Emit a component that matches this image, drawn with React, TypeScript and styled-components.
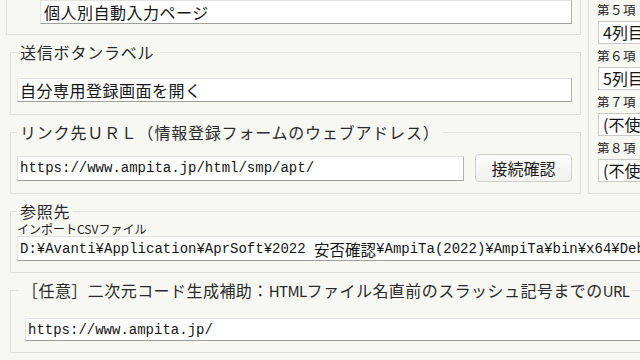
import React from "react";
import styled, { createGlobalStyle } from "styled-components";

const Global = createGlobalStyle`
  html, body { margin: 0; padding: 0; background: #f8f8f3; }
  body { font-family: "Noto Sans CJK JP", sans-serif; color: #1c1c1c; }
`;

const Viewport = styled.div`
  width: 640px;
  height: 360px;
  overflow: hidden;
  background: #f8f8f3;
`;

const TopRow = styled.div`
  display: flex;
  align-items: flex-start;
  margin-top: -26px;
  width: 760px;
`;

const LeftCol = styled.div`
  flex: none;
  width: 575px;
  margin-left: 6px;
  display: flex;
  flex-direction: column;
  gap: 7px;
`;

const Group = styled.fieldset<{ $ml?: number; $pl?: number; $pr?: number; $pt?: number; $pb?: number; $w?: string }>`
  margin: 0 0 0 ${(p) => p.$ml ?? 0}px;
  padding: ${(p) => p.$pt ?? 0}px ${(p) => p.$pr ?? 8}px ${(p) => p.$pb ?? 11}px ${(p) => p.$pl ?? 6}px;
  border: 1px solid #e0dfd8;
  min-width: 0;
  width: ${(p) => p.$w ?? "auto"};
  box-sizing: border-box;
`;

const Legend = styled.legend<{ $ls?: number }>`
  padding: 0 3px;
  margin: 0;
  font-size: 16px;
  line-height: 20px;
  letter-spacing: ${(p) => p.$ls ?? 0.8}px;
  color: #2a2a2a;
  white-space: nowrap;
`;

const Narrow = styled.span`
  letter-spacing: -0.6px;
  font-size: 15px;
`;

const TextBox = styled.div<{ $mt?: number; $h?: number; $ml?: number; $mono?: boolean; $pl?: number }>`
  box-sizing: border-box;
  height: ${(p) => p.$h ?? 24}px;
  margin-top: ${(p) => p.$mt ?? 0}px;
  margin-left: ${(p) => p.$ml ?? 0}px;
  padding-left: ${(p) => p.$pl ?? 2}px;
  background: #ffffff;
  border: 1px solid;
  border-color: #e2e2e0 #b4b4b2 #9e9e9c #e2e2e0;
  display: flex;
  align-items: center;
  white-space: pre;
  overflow: hidden;
  flex: 1;
  min-width: 0;
  font-family: ${(p) =>
    p.$mono ? `"Liberation Mono", "Noto Sans CJK JP", monospace` : `"Noto Sans CJK JP", sans-serif`};
  font-size: ${(p) => (p.$mono ? 14 : 16)}px;
  letter-spacing: ${(p) => (p.$mono ? 0 : 0.5)}px;
  color: #141414;
`;

const Wide = styled.span`
  font-family: "Noto Sans CJK JP", sans-serif;
  font-size: 15.5px;
`;

const Row = styled.div`
  display: flex;
  align-items: center;
  gap: 11px;
  margin-top: 12px;
  height: 28px;
`;

const Button = styled.button`
  flex: none;
  width: 97px;
  height: 28px;
  box-sizing: border-box;
  border: 1px solid #cfcfcc;
  border-radius: 4px;
  background: linear-gradient(#fbfbf9, #f1f1ee);
  font-family: "Noto Sans CJK JP", sans-serif;
  font-size: 16px;
  color: #1c1c1c;
  padding: 0;
`;

const RightCol = styled.fieldset`
  flex: none;
  width: 140px;
  margin: 0 0 0 7px;
  padding: 0 8px 11px 8px;
  border: 1px solid #e0dfd8;
  box-sizing: border-box;
  display: flex;
  flex-direction: column;
`;

const ItemLabel = styled.div`
  height: 23px;
  line-height: 23px;
  font-size: 12.5px;
  letter-spacing: 0.5px;
  color: #222;
  white-space: nowrap;
`;

const SelectBox = styled.div`
  box-sizing: border-box;
  height: 23px;
  margin-left: 1px;
  background: #ffffff;
  border: 1px solid #c9c9c6;
  padding-left: 4px;
  font-size: 16px;
  line-height: 21px;
  color: #141414;
  white-space: nowrap;
  overflow: hidden;
`;

const FullGroup = styled(Group)`
  margin-top: 7px;
`;

const SmallLabel = styled.div`
  height: 15px;
  line-height: 15px;
  font-size: 12px;
  color: #1c1c1c;
  white-space: nowrap;
`;

const items = [
  { label: "第５項", value: "4列目" },
  { label: "第６項", value: "5列目" },
  { label: "第７項", value: "(不使用)" },
  { label: "第８項", value: "(不使用)" },
];

export default function App() {
  return (
    <Viewport>
      <Global />
      <TopRow>
        <LeftCol>
          <Group $pl={33} $pr={8} $pt={25} $pb={10}>
            <TextBox $pl={3}>個人別自動入力ページ</TextBox>
          </Group>
          <Group $ml={4} $pb={12}>
            <Legend>送信ボタンラベル</Legend>
            <TextBox $mt={16}>自分専用登録画面を開く</TextBox>
          </Group>
          <Group $ml={4}>
            <Legend>リンク先ＵＲＬ（情報登録フォームのウェブアドレス）</Legend>
            <Row>
              <TextBox $h={25} $mono>https://www.ampita.jp/html/smp/apt/</TextBox>
              <Button>接続確認</Button>
            </Row>
          </Group>
        </LeftCol>
        <RightCol>
          <SelectBox>3列目</SelectBox>
          {items.map((it) => (
            <React.Fragment key={it.label}>
              <ItemLabel>{it.label}</ItemLabel>
              <SelectBox>{it.value}</SelectBox>
            </React.Fragment>
          ))}
        </RightCol>
      </TopRow>
      <FullGroup $ml={10} $w="760px">
        <Legend>参照先</Legend>
        <SmallLabel>インポートCSVファイル</SmallLabel>
        <TextBox $h={25} $mono $pl={2}>
          {"D:¥Avanti¥Application¥AprSoft¥2022 "}
          <Wide>安否確認</Wide>
          {"¥AmpiTa(2022)¥AmpiTa¥bin¥x64¥Debug¥import.csv"}
        </TextBox>
      </FullGroup>
      <FullGroup $ml={10} $w="760px" $pl={8}>
        <Legend $ls={0.45}>
          ［任意］二次元コード生成補助：<Narrow>HTML</Narrow>ファイル名直前のスラッシュ記号までの<Narrow>URL</Narrow>
        </Legend>
        <TextBox $mt={17} $h={23} $ml={6} $mono>https://www.ampita.jp/</TextBox>
      </FullGroup>
    </Viewport>
  );
}
